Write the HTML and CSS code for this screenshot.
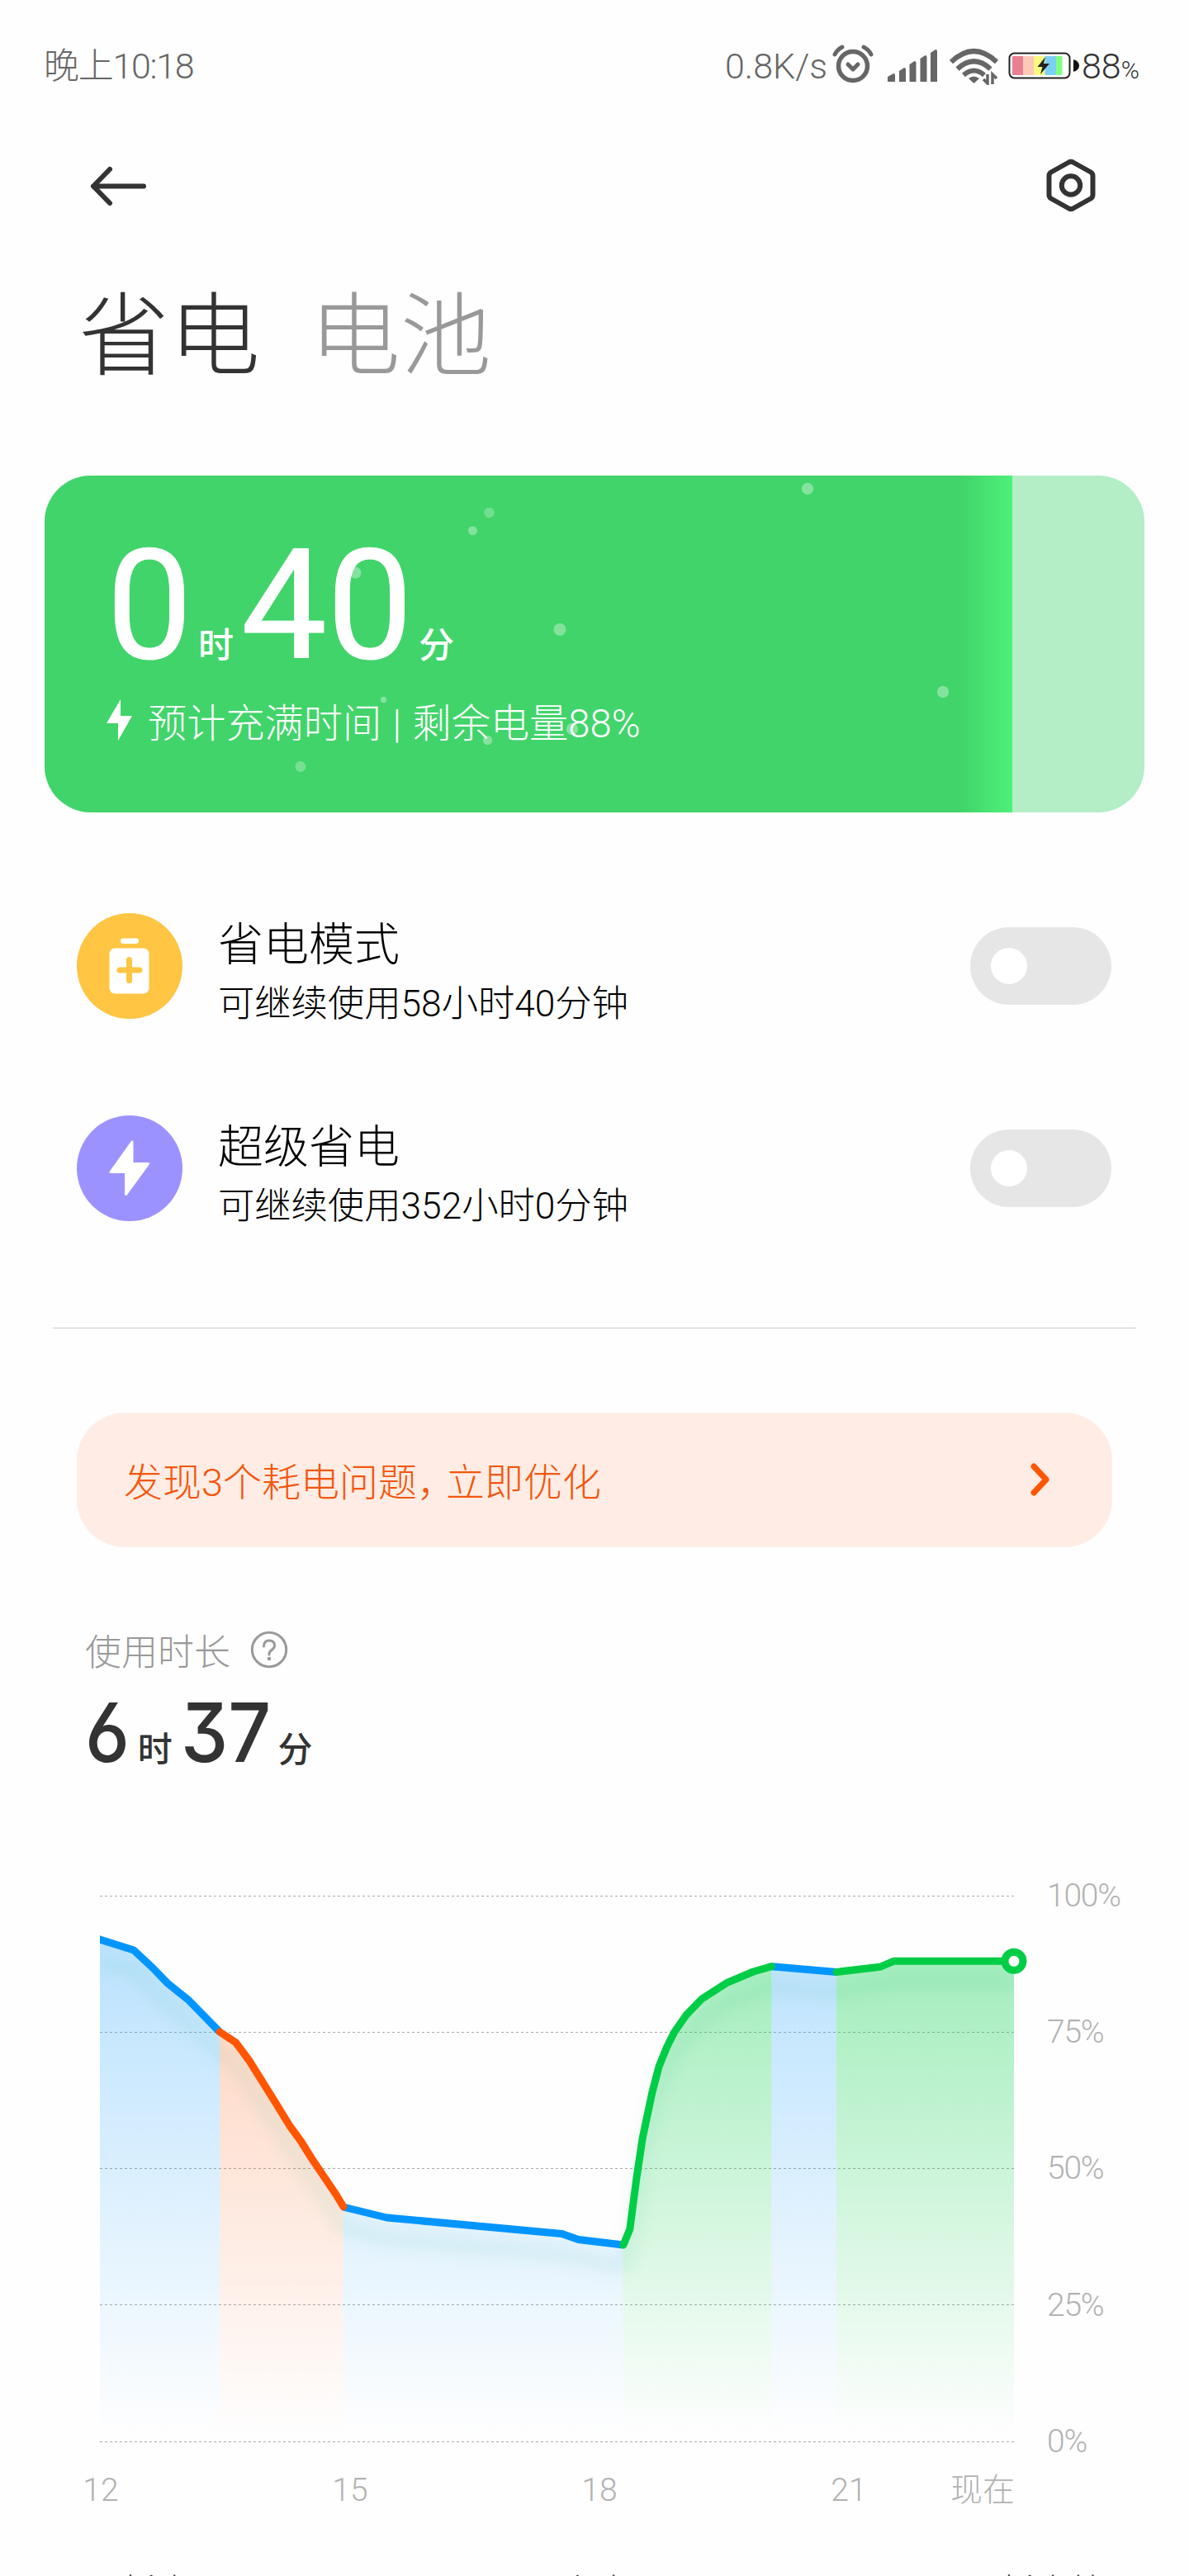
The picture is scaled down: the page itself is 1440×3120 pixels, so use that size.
FILE: index.html
```html
<!DOCTYPE html>
<html lang="zh-CN">
<head>
    <meta charset="UTF-8">
    <meta name="viewport" content="width=device-width, initial-scale=1.0">
    <title>省电与电池</title>
    <link rel="stylesheet" href="styles.css">
</head>
<body>
    <!-- 状态栏 -->
    <div class="statusbar">
        <span class="time">晚上10:18</span>
        <div class="status-right">
            <span class="speed">0.8K/s</span>
            <svg class="alarm" width="50" height="48" viewBox="0 0 50 48" fill="none" stroke="#666" stroke-linecap="round">
                <circle cx="25" cy="26" r="17.5" stroke-width="5.5"/>
                <path d="M3 12Q6 6 12 3M47 12Q44 6 38 3" stroke-width="5"/>
                <path d="M19 24l6 6 6-6" stroke-width="5" stroke-linejoin="round"/>
            </svg>
            <svg class="signal" width="60" height="40" viewBox="0 0 60 40" fill="#666">
                <path d="M0 33l7-4q2 0 2 2v8H0zM14 26l6-4q2 0 2 2v15h-8zM26.500 18l6-4q2 0 2 2v23h-8zM39.500 11l6-4q2 0 2 2v30h-8zM52 4l6-4q2 0 2 2v37h-8z"/>
            </svg>
            <svg class="wifi" width="60" height="46" viewBox="0 0 60 46" fill="none" stroke="#666" stroke-width="6">
                <path d="M2 18Q29.500-8 57 18M9.500 26.500Q29.500 8 49.500 26.500M17 34Q29.500 23 42 34"/>
                <path d="M23 38q6.500-5 13 0l-6.500 6z" fill="#666" stroke="none"/>
                <path d="M46 33v11l-5-5M52 45V33l5 5" stroke-width="3.500"/>
            </svg>
            <svg class="battery" width="86" height="34" viewBox="0 0 86 34">
                <rect x="1.500" y="1.500" width="73" height="30" rx="6" fill="#fff" stroke="#222" stroke-width="2"/>
                <path d="M79 9q7 2 7 7.500T79 24z" fill="#111"/>
                <path d="M5 5h13v23H5z" fill="#e87f92"/>
                <path d="M18 5h13v23H18z" fill="#fcc8b8"/>
                <path d="M31 5h13.500v23H31z" fill="#fafa80"/>
                <path d="M44.500 5H58v23H44.500z" fill="#7dd0f5"/>
                <path d="M58 5h7.500v23H58z" fill="#80ff80"/>
                <path d="M45 6L35.500 18h6L39 27l11-13h-7z" fill="#222"/>
            </svg>
            <span class="level">88<small>%</small></span>
        </div>
    </div>

    <!-- 标题栏 -->
    <div class="toolbar">
        <svg width="68" height="50" viewBox="0 0 68 50" fill="none" stroke="#333" stroke-width="6" stroke-linecap="round" stroke-linejoin="round">
            <path d="M24 5L4 25.500L24 46M4 25.500h61"/>
        </svg>
        <svg width="60" height="66" viewBox="0 0 60 66" fill="none" stroke="#333" stroke-width="6" stroke-linejoin="round">
            <path d="M27.500 4.500q2.500-1.300 5 0L54 16.500q2.500 1.500 2.500 4.500v23q0 3-2.500 4.500L32.500 60.500q-2.500 1.300-5 0L6 48.500Q3.500 47 3.500 44V21q0-3 2.500-4.500z"/>
            <circle cx="30" cy="32.500" r="11.200"/>
        </svg>
    </div>
    <div class="tabs">
        <span class="tab active">省电</span>
        <span class="tab">电池</span>
    </div>

    <!-- 充电卡片 -->
    <div class="card">
        <div class="card-level"></div>
        <div class="card-text">
            <div class="card-time"><b>0</b><i>时</i><b>40</b><i>分</i></div>
            <div class="card-desc">
                <svg width="32" height="50" viewBox="0 0 32 50" fill="#fff"><path d="M17 0v20h14L14 50V29H0z"/></svg>
                <span>预计充满时间 | 剩余电量88%</span>
            </div>
        </div>
        <svg class="bubbles" width="1332" height="408" viewBox="54 576 1332 408" fill="#fff" fill-opacity=".35">
            <circle cx="592.500" cy="621" r="6.200" fill-opacity=".25"/>
            <circle cx="572.500" cy="642.700" r="5.500"/>
            <circle cx="430.500" cy="693.700" r="7"/>
            <circle cx="678" cy="762.400" r="7.500"/>
            <circle cx="464.500" cy="847.500" r="3.700"/>
            <circle cx="590.500" cy="896.500" r="5.700"/>
            <circle cx="693" cy="883" r="7.200"/>
            <circle cx="364" cy="928.500" r="6.500" fill-opacity=".28"/>
            <circle cx="978" cy="592" r="7.200"/>
            <circle cx="1142" cy="838" r="7.200"/>
        </svg>
    </div>

    <!-- 省电开关 -->
    <div class="modes">
        <div class="mode">
            <svg width="128" height="128" viewBox="0 0 128 128">
                <circle cx="64" cy="64" r="64" fill="#ffc543"/>
                <rect x="53" y="30.500" width="22" height="6.500" rx="3" fill="#fff"/>
                <rect x="39.500" y="42.500" width="48" height="55" rx="6.500" fill="#fff"/>
                <path d="M63.500 56.500v25M52 69h24" stroke="#ffc543" stroke-width="7" stroke-linecap="round"/>
            </svg>
            <div class="mode-text">
                <div class="mode-title">省电模式</div>
                <div class="mode-sub">可继续使用58小时40分钟</div>
            </div>
            <div class="switch"></div>
        </div>
        <div class="mode">
            <svg width="128" height="128" viewBox="0 0 128 128">
                <circle cx="64" cy="64" r="64" fill="#9c92ff"/>
                <path d="M67 32L41 68.500h18.500v27L86.500 58.500H67z" fill="#fff" stroke="#fff" stroke-width="3" stroke-linejoin="round"/>
            </svg>
            <div class="mode-text">
                <div class="mode-title">超级省电</div>
                <div class="mode-sub">可继续使用352小时0分钟</div>
            </div>
            <div class="switch"></div>
        </div>
    </div>

    <!-- 优化提示 -->
    <div class="notice">
        <span>发现3个耗电问题<span class="comma">，</span>立即优化</span>
        <svg width="26" height="42" viewBox="0 0 26 42" fill="none" stroke="#ff5500" stroke-width="7" stroke-linecap="round" stroke-linejoin="round"><path d="M5 6l15 16L5 38"/></svg>
    </div>

    <!-- 使用时长 -->
    <div class="usage">
        <div class="usage-label">
            <span>使用时长</span>
            <svg width="46" height="46" viewBox="0 0 46 46" fill="none" stroke="#999" stroke-width="3">
                <circle cx="23" cy="23" r="20.700"/>
                <path d="M16.500 19q0-7 6.500-7t6.500 6q0 3-3.500 5.500t-3 5.500" stroke-linecap="round"/>
                <circle cx="23" cy="34" r="2.300" fill="#999" stroke="none"/>
            </svg>
        </div>
        <div class="usage-time"><b class="hours">6</b><i>时</i><b class="minutes">37</b><i>分</i></div>
    </div>

    <!-- 电量曲线 -->
    <div class="chart">
        <svg class="plot" width="1140" height="700" viewBox="110 2280 1140 700" fill="none">
            <defs>
                <linearGradient id="blue" gradientUnits="userSpaceOnUse" x1="0" y1="2340" x2="0" y2="2950"><stop stop-color="#0095ff" stop-opacity=".27"/><stop offset="1" stop-color="#0095ff" stop-opacity="0"/></linearGradient>
                <linearGradient id="orange" gradientUnits="userSpaceOnUse" x1="0" y1="2340" x2="0" y2="2950"><stop stop-color="#ff5500" stop-opacity=".27"/><stop offset="1" stop-color="#ff5500" stop-opacity="0"/></linearGradient>
                <linearGradient id="green" gradientUnits="userSpaceOnUse" x1="0" y1="2340" x2="0" y2="2950"><stop stop-color="#00d046" stop-opacity=".38"/><stop offset="1" stop-color="#00d046" stop-opacity="0"/></linearGradient>
                <clipPath id="box"><path d="M121 2280h1107v677H121z"/></clipPath>
                <filter id="blur" filterUnits="userSpaceOnUse" x="80" y="2260" width="1200" height="720"><feGaussianBlur stdDeviation="9"/></filter>
            </defs>
            <path d="M121 2296.500h1107M121 2461.500h1107M121 2626.500h1107M121 2791.500h1107M121 2957.500h1107" stroke="#aaa" stroke-dasharray="3 3"/>
            <g clip-path="url(#box)">
                <path fill="url(#blue)" d="M121 2349L162 2362L185 2383.500L202.500 2401.700L227.500 2421.700L266 2461V2957H121z"/>
                <path fill="url(#orange)" d="M266 2461L285.500 2473.700L302 2496L333 2545.700L351 2575L364.500 2593.500L377 2613.500L393.500 2638L407 2658L415.500 2673V2957H266z"/>
                <path fill="url(#blue)" d="M415.500 2673L468.500 2686L680.500 2705.500L700.500 2712.500L754.500 2719V2957H415.500z"/>
                <path fill="url(#green)" d="M754.500 2719L762.800 2700L770.800 2639L778.300 2589L789.700 2535L798 2503L807.600 2479.500L816.500 2461.500L831 2440.700L850 2421L880 2401.700L912.400 2388L934.500 2381.700V2957H754.500z"/>
                <path fill="url(#blue)" d="M934.500 2381.700L1013 2388.500V2957H934.500z"/>
                <path fill="url(#green)" d="M1013 2388.500L1065.700 2382.300L1082.300 2375.300H1228V2957H1013z"/>
                <path transform="translate(0 26)" filter="url(#blur)" stroke="#00a060" stroke-opacity=".09" stroke-width="14" d="M121 2349L162 2362L202 2401L227 2421L266 2461L285 2473L333 2545L364 2593L416 2673L468 2686L680 2705L754 2719L763 2700L778 2583L798 2503L816 2461L850 2421L880 2401L934 2381L1013 2388L1082 2375H1228"/>
                <g stroke-width="9" stroke-linejoin="round">
                    <path stroke="#0095ff" d="M110 2345.500L121 2349L162 2362L185 2383.500L202.500 2401.700L227.500 2421.700L266 2461"/>
                    <path stroke="#0095ff" d="M415.500 2673L468.500 2686L680.500 2705.500L700.500 2712.500L754.500 2719"/>
                    <path stroke="#0095ff" d="M934.500 2381.700L1013 2388.500"/>
                    <path stroke="#ff5500" stroke-linecap="round" d="M266 2461L285.500 2473.700L302 2496L333 2545.700L351 2575L364.500 2593.500L377 2613.500L393.500 2638L407 2658L416 2673"/>
                    <path stroke="#00cd46" stroke-linecap="round" d="M755 2719L762.800 2700L770.800 2639L778.300 2589L789.700 2535L798 2503L807.600 2479.500L816.500 2461.500L831 2440.700L850 2421L880 2401.700L912.400 2388L934.500 2381.700M1013 2388.500L1065.700 2382.300L1082.300 2375.300H1228"/>
                </g>
            </g>
            <circle cx="1228" cy="2375.300" r="11" fill="#fff" stroke="#00cd46" stroke-width="9"/>
        </svg>
        <div class="y-axis"><span>100%</span><span>75%</span><span>50%</span><span>25%</span><span>0%</span></div>
    </div>
    <div class="x-axis"><span>12</span><span>15</span><span>18</span><span>21</span><span class="now">现在</span></div>

    <div class="legend"><span>耗电</span><span>充电</span><span>耗电快</span></div>
</body>
</html>
```
FILE: styles.css
```css
* { box-sizing: border-box; }
body { margin: 0; width: 1440px; height: 3120px; overflow: hidden; background: #fefefe; color: #333; font-family: Roboto, "Noto Sans CJK SC", sans-serif; font-weight: 300; }
svg { display: block; flex: none; }
b { font-weight: 400; }
i { font-style: normal; font-weight: 500; }

.statusbar { display: flex; justify-content: space-between; height: 160px; padding: 0 58px 0 53px; font-size: 43px; line-height: 160px; color: #666; }
.time { letter-spacing: -1.3px; }
.status-right { display: flex; }
.speed { width: 130px; }
.alarm { margin-top: 54px; }
.signal { margin: 60px 0 0 17px; }
.wifi { margin: 57px 0 0 15px; }
.battery { margin: 63px 0 0 11px; }
.level { width: 75px; padding-left: 3px; color: #333; white-space: nowrap; }
.level small { font-size: 30px; }

.toolbar { display: flex; justify-content: space-between; align-items: center; height: 130px; padding: 0 113px 0 109px; }
.tabs { display: flex; gap: 60px; height: 286px; padding: 39px 0 0 95px; font-size: 110px; line-height: 160px; }
.tab { color: #999; }
.tab.active { color: #333; }

.card { position: relative; width: 1332px; height: 408px; margin-left: 54px; border-radius: 56px; background: #b3eec6; overflow: hidden; }
.card-level { position: absolute; top: 0; left: 0; width: 1172px; height: 408px; background: linear-gradient(90deg, #41d46a 94.5%, #4df077); }
.bubbles { position: absolute; top: 0; left: 0; }
.card-text { position: relative; padding: 48px 0 0 75px; color: #fff; }
.card-time { display: flex; align-items: baseline; height: 213px; line-height: 220px; }
.card-time b { font-size: 185px; -webkit-text-stroke: 1px #fff; }
.card-time i { font-size: 43px; margin: 0 9px 0 7px; }
.card-desc { display: flex; align-items: center; gap: 18px; height: 70px; font-size: 47.2px; word-spacing: 2px; }

.modes { width: 1312px; height: 625px; margin-left: 64px; padding: 122px 30px 0 29px; border-bottom: 1px solid #ccc; }
.mode { display: flex; align-items: center; height: 128px; margin-bottom: 117px; color: #000; }
.mode-text { flex: 1; margin-left: 43px; padding-top: 11px; }
.mode-title { font-size: 55px; line-height: 80px; }
.mode-sub { font-size: 44.3px; line-height: 64px; }
.switch { width: 171px; height: 94px; padding: 25px; border-radius: 47px; background: #e6e6e6; }
.switch::before { content: ""; display: block; width: 44px; height: 44px; border-radius: 22px; background: #fff; }

.notice { display: flex; justify-content: space-between; align-items: center; width: 1254px; height: 163px; margin: 102px 0 0 93px; padding: 0 74px 3px 57px; border-radius: 58px; background: #ffede5; color: #f4560e; font-size: 47px; }
.comma { letter-spacing: -12px; }

.usage { height: 406px; padding: 92px 0 0 103px; }
.usage-label { display: flex; align-items: center; gap: 24px; height: 64px; font-size: 44px; color: #999; }
.usage-time { display: flex; align-items: baseline; padding-top: 3px; line-height: 130px; }
/* 数字压窄，平顶 3 */
.usage-time b { font-family: Inter, Roboto, sans-serif; font-size: 99px; font-weight: 500; font-feature-settings: "cv09", "cv03"; transform: scaleX(.92); transform-origin: left; }
.usage-time .hours { margin-right: -5px; }
.usage-time .minutes { margin-right: -11px; }
.usage-time i { font-size: 42px; margin: 0 10px 0 10px; }

.chart { display: flex; height: 700px; padding-left: 110px; }
.y-axis { display: flex; flex-direction: column; width: 120px; margin: -14px 0 0 18px; font-size: 39px; letter-spacing: -1.2px; color: #b2b2b2; }
.y-axis span { flex: none; height: 165.2px; line-height: 60px; }
.x-axis { display: flex; height: 100px; margin-left: -29px; font-size: 39px; line-height: 72px; color: #b2b2b2; }
.x-axis span { flex: none; width: 302px; text-align: center; }
.x-axis .now { width: auto; margin-left: -28px; }
.legend { display: grid; grid-template-columns: 532px 532px auto; padding: 28px 0 0 147px; font-size: 43px; line-height: 64px; color: #333; }
```
